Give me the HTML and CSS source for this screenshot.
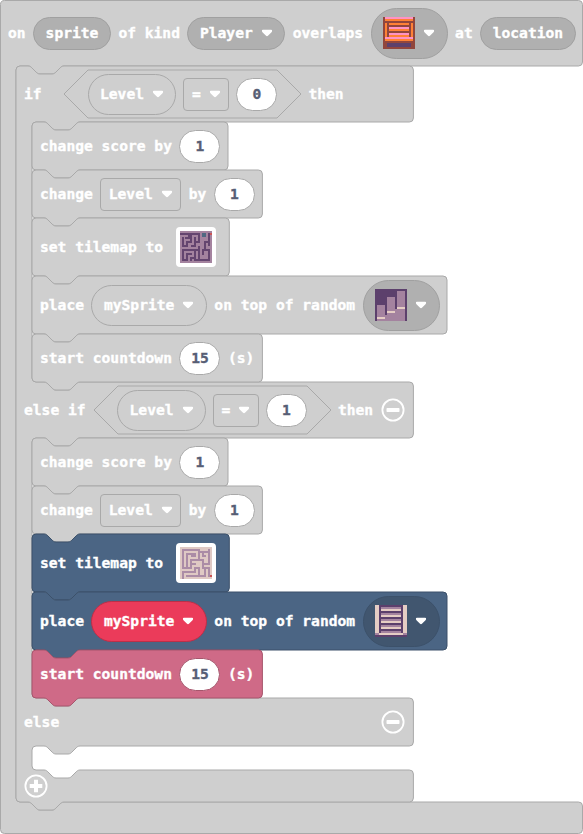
FILE: index.html
```html
<!DOCTYPE html>
<html lang="en">
<head>
<meta charset="utf-8">
<title>Blocks</title>
<link rel="stylesheet" href="styles.css">
</head>
<body>
<svg class="defs" width="0" height="0" aria-hidden="true">
  <symbol id="arrow" viewBox="0 0 12 8"><path d="M2 .7H10Q11.3 .7 11.1 2Q11 2.8 10.3 3.4L7.2 6.6Q6 7.7 4.8 6.6L1.7 3.4Q1 2.8 .9 2Q.7 .7 2 .7Z" fill="#fff"/></symbol>
  <symbol id="minus" viewBox="0 0 24 24"><circle cx="12" cy="12" r="10.6" fill="none" stroke="#fff" stroke-width="1.8"/><rect x="5.5" y="10" width="13" height="4" rx=".7" fill="#fff"/></symbol>
  <symbol id="plus" viewBox="0 0 24 24"><circle cx="12" cy="12" r="10.6" fill="none" stroke="#fff" stroke-width="1.8"/><path d="M10 5.7h4V10h4.3v4H14v4.3h-4V14H5.7v-4H10Z" fill="#fff"/></symbol>
  <symbol id="b-score" overflow="visible"><path d="M0 4A4 4 0 0 1 4 0H12c2 0 3 1 4 2l4 4c1 1 2 2 4 2h12c2 0 3-1 4-2l4-4c1-1 2-2 4-2H192a4 4 0 0 1 4 4V44a4 4 0 0 1-4 4H48c-2 0-3 1-4 2l-4 4c-1 1-2 2-4 2H24c-2 0-3-1-4-2l-4-4c-1-1-2-2-4-2H4a4 4 0 0 1-4-4Z"/></symbol>
  <symbol id="b-mid" overflow="visible"><path d="M0 4A4 4 0 0 1 4 0H12c2 0 3 1 4 2l4 4c1 1 2 2 4 2h12c2 0 3-1 4-2l4-4c1-1 2-2 4-2H226.4a4 4 0 0 1 4 4V44a4 4 0 0 1-4 4H48c-2 0-3 1-4 2l-4 4c-1 1-2 2-4 2H24c-2 0-3-1-4-2l-4-4c-1-1-2-2-4-2H4a4 4 0 0 1-4-4Z"/></symbol>
  <symbol id="b-map" overflow="visible"><path d="M0 4A4 4 0 0 1 4 0H12c2 0 3 1 4 2l4 4c1 1 2 2 4 2h12c2 0 3-1 4-2l4-4c1-1 2-2 4-2H193.3a4 4 0 0 1 4 4V54a4 4 0 0 1-4 4H48c-2 0-3 1-4 2l-4 4c-1 1-2 2-4 2H24c-2 0-3-1-4-2l-4-4c-1-1-2-2-4-2H4a4 4 0 0 1-4-4Z"/></symbol>
  <symbol id="b-place" overflow="visible"><path d="M0 4A4 4 0 0 1 4 0H12c2 0 3 1 4 2l4 4c1 1 2 2 4 2h12c2 0 3-1 4-2l4-4c1-1 2-2 4-2H411a4 4 0 0 1 4 4V54a4 4 0 0 1-4 4H48c-2 0-3 1-4 2l-4 4c-1 1-2 2-4 2H24c-2 0-3-1-4-2l-4-4c-1-1-2-2-4-2H4a4 4 0 0 1-4-4Z"/></symbol>
  <symbol id="hex" overflow="visible"><path d="M24 0H213L237 24L213 48H24L0 24Z"/></symbol>
</svg>

<main class="event">
  <svg class="shape" aria-hidden="true"><path d="M.5 4.5A4 4 0 0 1 4.5 .5H578.5a4 4 0 0 1 4 4V62a4 4 0 0 1-4 4H64c-2 0-3 1-4 2l-4 4c-1 1-2 2-4 2H40c-2 0-3-1-4-2l-4-4c-1-1-2-2-4-2H20a4 4 0 0 0-4 4V798a4 4 0 0 0 4 4H28c2 0 3 1 4 2l4 4c1 1 2 2 4 2h12c2 0 3-1 4-2l4-4c1-1 2-2 4-2H578.5a4 4 0 0 1 4 4V829.5a4 4 0 0 1-4 4H4.5a4 4 0 0 1-4-4Z"/></svg>

  <header class="row event-head">
    <span>on</span><span class="pill dark">sprite</span><span>of kind</span>
    <span class="pill dark">Player<svg class="arrow"><use href="#arrow"/></svg></span>
    <span>overlaps</span>
    <span class="pill dark tile">
      <svg class="pix" viewBox="0 0 16 16" shape-rendering="crispEdges"><path fill="#91463d" d="M0 0h16v16H0z"/><path fill="#ff93c4" d="M1 0h14v1H1zM3 5h10v1H3zM3 8h10v1H3zM1 10h14v1H1z"/><path fill="#ff8135" d="M1 1h14v1H1zM1 3h1v7H1zM14 3h1v7h-1zM3 3h10v1H3zM3 6h10v1H3zM3 9h10v1H3zM1 11h14v1H1z"/><path fill="#5c406c" d="M2 13h12v2H2z"/></svg>
      <svg class="arrow"><use href="#arrow"/></svg></span>
    <span>at</span><span class="pill dark">location</span>
  </header>

  <section class="branch">
    <svg class="shape" aria-hidden="true"><path d="M0 4A4 4 0 0 1 4 0H12c2 0 3 1 4 2l4 4c1 1 2 2 4 2h12c2 0 3-1 4-2l4-4c1-1 2-2 4-2H393.4a4 4 0 0 1 4 4V52a4 4 0 0 1-4 4H64c-2 0-3 1-4 2l-4 4c-1 1-2 2-4 2H40c-2 0-3-1-4-2l-4-4c-1-1-2-2-4-2H20a4 4 0 0 0-4 4V312a4 4 0 0 0 4 4H28c2 0 3 1 4 2l4 4c1 1 2 2 4 2h12c2 0 3-1 4-2l4-4c1-1 2-2 4-2H393.4a4 4 0 0 1 4 4V368a4 4 0 0 1-4 4H64c-2 0-3 1-4 2l-4 4c-1 1-2 2-4 2H40c-2 0-3-1-4-2l-4-4c-1-1-2-2-4-2H20a4 4 0 0 0-4 4V628a4 4 0 0 0 4 4H28c2 0 3 1 4 2l4 4c1 1 2 2 4 2h12c2 0 3-1 4-2l4-4c1-1 2-2 4-2H393.4a4 4 0 0 1 4 4V676a4 4 0 0 1-4 4H64c-2 0-3 1-4 2l-4 4c-1 1-2 2-4 2H40c-2 0-3-1-4-2l-4-4c-1-1-2-2-4-2H20a4 4 0 0 0-4 4V700a4 4 0 0 0 4 4H28c2 0 3 1 4 2l4 4c1 1 2 2 4 2h12c2 0 3-1 4-2l4-4c1-1 2-2 4-2H393.4a4 4 0 0 1 4 4V732a4 4 0 0 1-4 4H48c-2 0-3 1-4 2l-4 4c-1 1-2 2-4 2H24c-2 0-3-1-4-2l-4-4c-1-1-2-2-4-2H4a4 4 0 0 1-4-4Z"/></svg>

    <div class="row cond">
      <span class="if-label">if</span>
      <span class="row hex"><svg class="shape"><use href="#hex"/></svg><span class="pill tall">Level<svg class="arrow"><use href="#arrow"/></svg></span><span class="box">=<svg class="arrow"><use href="#arrow"/></svg></span><span class="num">0</span></span>
      <span>then</span>
    </div>

    <div class="stack">
      <div class="row block"><svg class="shape"><use href="#b-score"/></svg><span>change score by</span><span class="num">1</span></div>
      <div class="row block"><svg class="shape"><use href="#b-mid"/></svg><span>change</span><span class="box">Level<svg class="arrow"><use href="#arrow"/></svg></span><span>by</span><span class="num">1</span></div>
      <div class="row block high"><svg class="shape"><use href="#b-map"/></svg><span>set tilemap to</span>
        <span class="map"><svg class="pix" viewBox="0 0 16 16"><path fill="#a4839f" d="M0 0h16v16H0z"/><path fill="none" stroke="#64456f" d="M0 1.5H4.5V3.5H2.5M1.5 3V7.5H3.5V5.5H5.5V1.5H9.5V5.5H7.5V7.5H5.5M7.5 3V5.5M1 9.5H9.5V7.5M1.5 9V14.5H3.5V11.5H6M5.5 15V13.5H7.5V9.5M7 14.5H14.5V9.5H11.5V12M9.5 14V9.5M12.5 9V5.5H14.5V1M14.5 5V7.5"/><path fill="#4f6983" d="M11 1h2v2h-2z"/><path fill="#cb5354" d="M15 1h1v1h-1z"/></svg></span>
      </div>
      <div class="row block high"><svg class="shape"><use href="#b-place"/></svg><span>place</span><span class="pill tall">mySprite<svg class="arrow"><use href="#arrow"/></svg></span><span>on top of random</span>
        <span class="pill dark tile"><svg class="pix" viewBox="0 0 16 16" shape-rendering="crispEdges"><path fill="#5c406c" d="M0 0h16v16H0z"/><path fill="#a4839f" d="M1 8h4v8H1zM5 13h1v3H5zM6 4h4v12H6zM10 10h1v6h-1zM11 1h4v15h-4z"/><path fill="#e5cdc4" d="M1 14h4v1H1zM6 11h4v1H6zM11 9h4v1h-4z"/></svg><svg class="arrow"><use href="#arrow"/></svg></span>
      </div>
      <div class="row block"><svg class="shape"><use href="#b-mid"/></svg><span>start countdown</span><span class="num">15</span><span>(s)</span></div>
    </div>

    <div class="row cond">
      <span>else if</span>
      <span class="row hex"><svg class="shape"><use href="#hex"/></svg><span class="pill tall">Level<svg class="arrow"><use href="#arrow"/></svg></span><span class="box">=<svg class="arrow"><use href="#arrow"/></svg></span><span class="num">1</span></span>
      <span>then</span><svg class="round"><use href="#minus"/></svg>
    </div>

    <div class="stack">
      <div class="row block"><svg class="shape"><use href="#b-score"/></svg><span>change score by</span><span class="num">1</span></div>
      <div class="row block"><svg class="shape"><use href="#b-mid"/></svg><span>change</span><span class="box">Level<svg class="arrow"><use href="#arrow"/></svg></span><span>by</span><span class="num">1</span></div>
      <div class="row block high scene"><svg class="shape"><use href="#b-map"/></svg><span>set tilemap to</span>
        <span class="map"><svg class="pix" viewBox="0 0 16 16"><path fill="#dfc9c4" d="M0 0h16v16H0z"/><path fill="none" stroke="#ab8ca6" d="M1.5 11V1.5H9.5V6.5H5.5V8.5H8M3.5 11V3.5H7.5V4.5H5.5M1 10.5H5.5V8M1.5 16V12.5H7.5V10.5M3 14.5H9.5V10.5H7M9.5 2.5H14.5V1M11.5 2V4.5H13M14.5 3V8.5H11.5V6.5H9M11.5 8V10.5H14.5V15M12.5 10V14.5H9"/><path fill="#cb5354" d="M15 14h1v1h-1z"/></svg></span>
      </div>
      <div class="row block high scene"><svg class="shape"><use href="#b-place"/></svg><span>place</span><span class="pill tall red">mySprite<svg class="arrow"><use href="#arrow"/></svg></span><span>on top of random</span>
        <span class="pill dark tile"><svg class="pix" viewBox="0 0 16 16" shape-rendering="crispEdges"><path fill="#e5cdc4" d="M0 0h16v16H0z"/><path fill="#5c406c" d="M2 0h12v1H2zM2 1h1v13H2zM13 1h1v13h-1zM2 3h12v1H2zM2 6h12v1H2zM2 9h12v1H2zM2 12h12v1H2zM0 15h16v1H0z"/><path fill="#a4839f" d="M3 1h10v1H3zM3 4h10v1H3zM3 7h10v1H3zM3 10h10v1H3zM3 13h10v1H3zM0 14h2v1H0zM14 14h2v1h-2z"/></svg><svg class="arrow"><use href="#arrow"/></svg></span>
      </div>
      <div class="row block info"><svg class="shape"><use href="#b-mid"/></svg><span>start countdown</span><span class="num">15</span><span>(s)</span></div>
    </div>

    <div class="row cond else"><span>else</span><svg class="round"><use href="#minus"/></svg></div>
    <div class="empty"></div>
    <div class="row foot"><svg class="round"><use href="#plus"/></svg></div>
  </section>
</main>
</body>
</html>
```
FILE: styles.css
```css
:root {
  --fill: #cfcfcf;
  --line: #a9a9a9;
  --dark: #b0b0b0;
}

body {
  margin: 0;
  background: #fff;
  overflow: hidden;
  color: #fff;
  font: bold 14.62px/18px "DejaVu Sans Mono", monospace;
  -webkit-text-stroke: .35px currentColor;
  white-space: nowrap;
}

.defs { display: block; width: 0; height: 0; }

.event {
  position: relative;
  width: 583px;
  height: 834px;
}

.shape {
  position: absolute;
  inset: 0;
  width: 100%;
  height: 100%;
  overflow: visible;
  fill: var(--fill);
  stroke: var(--line);
  stroke-width: 1;
}

.row {
  position: relative;
  display: flex;
  align-items: center;
  gap: 8px;
}

.row > span { position: relative; flex: none; }

.event-head { height: 66px; padding-left: 8px; }

.branch {
  position: relative;
  margin-left: 16px;
  width: 397.4px;
  height: 736px;
}

.cond { height: 56px; padding: 0 8px; }
.if-label { width: 32px; }
.else { height: 48px; justify-content: space-between; }
.empty { height: 24px; }
.foot { height: 32px; padding-left: 8px; }

.stack {
  margin-left: 16px;
  display: flex;
  flex-direction: column;
  align-items: flex-start;
}

.block { height: 48px; padding: 0 8px; }
.high { height: 58px; }

.scene {
  --fill: #4b6584;
  --line: #3c516a;
  --dark: #41566f;
}

.info {
  --fill: #cf6a87;
  --line: #a6556c;
}

.hex { height: 48px; padding: 0 24px; margin-right: -.4px; }

.pill, .box, .num {
  box-sizing: border-box;
  height: 33px;
  margin: 0 -.5px;
  display: flex;
  align-items: center;
  gap: 8px;
  border: 1px solid var(--line);
}

.pill { padding: 0 11.5px; border-radius: 26px; }
.pill.tall { height: 41px; }
.dark { background: var(--dark); border-color: #a0a0a0; }
.scene .dark { border-color: #3c516a; }
.pill.tile { height: 51px; width: 77px; }
.red { background: #eb3b5a; border-color: #bc2f48; }
.box { padding: 0 7.5px; border-radius: 4px; }

.num {
  width: 41px;
  justify-content: center;
  border-radius: 16.5px;
  background: #fff;
  color: #575e75;
}

.arrow { flex: none; width: 12px; height: 8px; }
.round { position: relative; flex: none; width: 24px; height: 24px; margin-top: -1px; }
.pix { flex: none; display: block; width: 32px; height: 32px; }

.map {
  box-sizing: border-box;
  width: 40px;
  height: 40px;
  margin: 0 5px;
  padding: 4px;
  border-radius: 4px;
  background: #fff;
}
```
